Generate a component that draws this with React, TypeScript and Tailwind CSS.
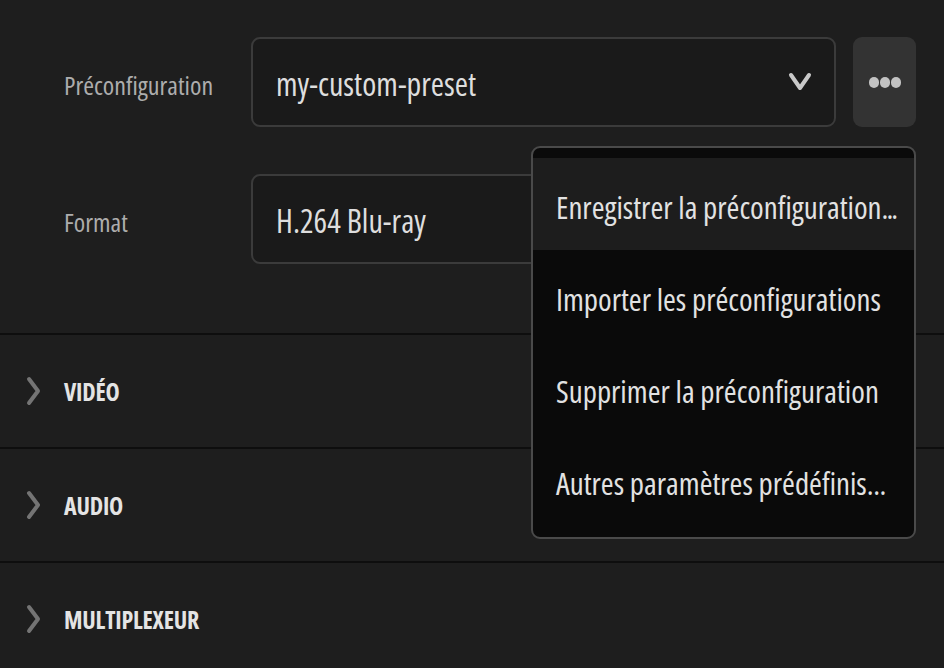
function ChevronDown() {
  return (
    <svg width="24" height="22" viewBox="0 0 24 22" fill="none">
      <path d="M3 4 L12 17 L21 4" stroke="#c9c9c9" strokeWidth="4" strokeLinecap="round" strokeLinejoin="round" />
    </svg>
  );
}

function ChevronRight() {
  return (
    <svg width="16" height="30" viewBox="0 0 16 30" fill="none">
      <path d="M3 3 L12 15 L3 27" stroke="#747474" strokeWidth="4" strokeLinecap="round" strokeLinejoin="round" />
    </svg>
  );
}

function Section({ title }: { title: string }) {
  return (
    <div className="h-[114px] flex items-center border-b-2 border-[#0e0e0e]">
      <div className="w-[64px] flex justify-start pl-[26px]">
        <ChevronRight />
      </div>
      <span className="text-[24px] font-bold text-[#e4e4e4] tracking-[-0.2px] translate-y-[1px]">{title}</span>
    </div>
  );
}

export default function App() {
  const items: [string, string][] = [
    ['Enregistrer la préconfiguration', '...'],
    ['Importer les préconfigurations', ''],
    ['Supprimer la préconfiguration', ''],
    ['Autres paramètres prédéfinis', '...'],
  ];
  return (
    <div className="w-[944px] h-[668px] overflow-hidden bg-[#1e1e1e] font-['Open_Sans',sans-serif] [font-stretch:75%] relative">
      <div className="h-[335px] relative pl-[64px] pr-[28px] pt-[37px] border-b-2 border-[#0e0e0e]">
        <div className="flex items-center h-[90px]">
          <span className="w-[187px] text-[26px] font-[380] text-[#adadad] translate-y-[3px]">Préconfiguration</span>
          <div className="flex-1 h-[90px] rounded-[9px] border-2 border-[#3b3b3b] bg-[#1a1a1a] flex items-center justify-between pl-[23px] pr-[22px]">
            <span className="text-[32px] font-[380] text-[#dedede] translate-y-[2px]">my-custom-preset</span>
            <ChevronDown />
          </div>
          <div className="ml-[17px] w-[63px] h-[90px] rounded-[9px] bg-[#333333] flex items-center justify-center gap-[1px]">
            <span className="w-[10px] h-[11px] rounded-full bg-[#c2c2c2]" />
            <span className="w-[10px] h-[11px] rounded-full bg-[#c2c2c2]" />
            <span className="w-[10px] h-[11px] rounded-full bg-[#c2c2c2]" />
          </div>
        </div>
        <div className="flex items-center h-[90px] mt-[47px]">
          <span className="w-[187px] text-[26px] font-[380] text-[#adadad] translate-y-[3px]">Format</span>
          <div className="flex-1 h-[90px] rounded-[9px] border-2 border-[#3b3b3b] bg-[#1a1a1a] flex items-center pl-[23px]">
            <span className="text-[32px] font-[380] text-[#dedede] translate-y-[2px]">H.264 Blu-ray</span>
          </div>
        </div>
        <div className="absolute left-[531px] top-[146px] w-[385px] h-[393px] rounded-[9px] border-2 border-[#4a4a4a] bg-[#0a0a0a] py-[10px] overflow-hidden">
          {items.map(([t, dots], i) => (
            <div
              key={t}
              className={`h-[92px] flex items-center pl-[23px] whitespace-nowrap ${i === 0 ? 'bg-[#1d1d1d]' : ''}`}
            >
              <span className="text-[31px] font-[380] text-[#e2e2e2] translate-y-[3px]">
                {t}
                {dots && <span className={i === 0 ? 'tracking-[-2px]' : 'tracking-[-0.5px]'}>{dots}</span>}
              </span>
            </div>
          ))}
        </div>
      </div>
      <Section title="VIDÉO" />
      <Section title="AUDIO" />
      <Section title="MULTIPLEXEUR" />
    </div>
  );
}
